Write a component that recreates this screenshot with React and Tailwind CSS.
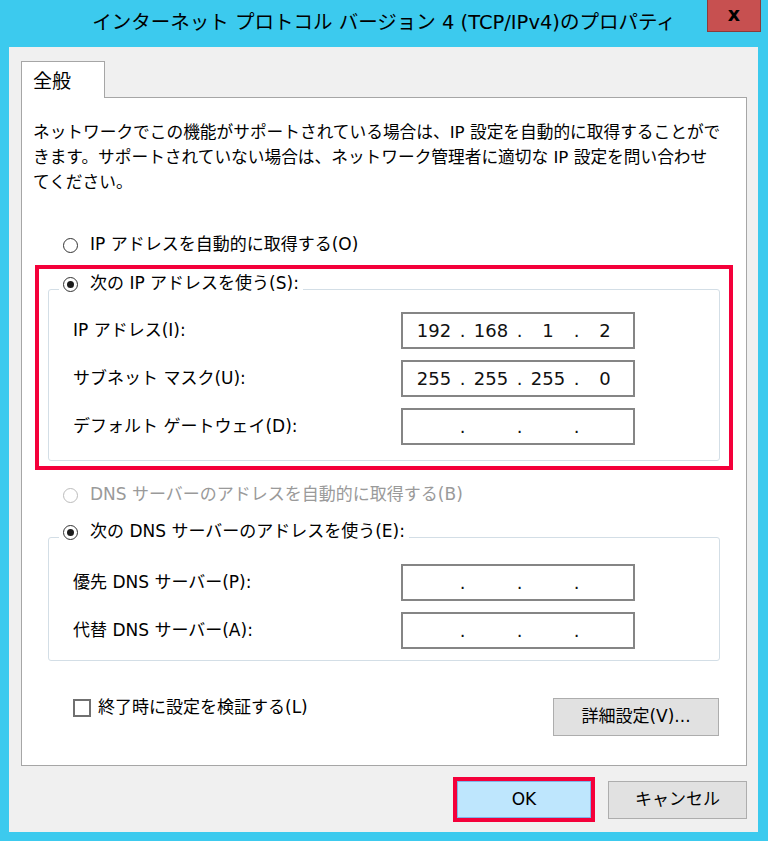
import React from "react";

const FONT = { fontFamily: '"DejaVu Sans", "Noto Sans CJK JP", sans-serif' };

function Radio({ checked, disabled }) {
  return (
    <span
      className={`flex items-center justify-center w-[15px] h-[15px] rounded-full border bg-white shrink-0 ${
        disabled ? "border-[#bcbcbc]" : "border-[#333333]"
      }`}
    >
      {checked && <span className="w-[7px] h-[7px] rounded-full bg-[#1c1c1c]" />}
    </span>
  );
}

function IpField({ parts }) {
  return (
    <div className="flex items-center w-[234px] h-[37px] border-2 border-[#858585] bg-white pl-[6px] text-[18px] text-[#111]">
      {parts.map((p, i) => (
        <React.Fragment key={i}>
          <span className="w-[50px] text-center">{p}</span>
          {i < 3 && <span className="w-[7px] text-center">.</span>}
        </React.Fragment>
      ))}
    </div>
  );
}

function Row({ label, parts }) {
  return (
    <div className="flex items-center pl-[24px]">
      <span className="w-[328px] text-[17px] whitespace-nowrap">{label}</span>
      <IpField parts={parts} />
    </div>
  );
}

function Legend({ text, ml }) {
  return (
    <legend className={`${ml} px-[4px] pb-[10px]`}>
      <span className="flex items-center h-[24px] gap-[12px] text-[17px] whitespace-nowrap">
        <Radio checked />
        <span>{text}</span>
      </span>
    </legend>
  );
}

export default function App() {
  const empty = ["", "", "", ""];
  return (
    <div className="relative w-[768px] h-[841px] bg-[#3ccaee] overflow-hidden text-black" style={FONT}>
      {/* title bar */}
      <div className="h-[47px] flex items-center justify-center text-[19.5px] whitespace-nowrap pb-[2px]">
        インターネット プロトコル バージョン 4 (TCP/IPv4)のプロパティ
      </div>
      <div className="absolute top-0 left-[707px] w-[54px] h-[32px] bg-[#c75050] border border-[#8a3b3b] border-t-0 flex items-center justify-center text-[19px] font-bold leading-none pb-[3px]">
        x
      </div>

      {/* client area */}
      <div className="ml-[9px] w-[749px] h-[785px] bg-[#f0f0f0] pt-[14px] pl-[12px]">
        <div className="relative z-10 -mb-px w-[84px] h-[37px] bg-white border border-b-0 border-[#a6a6a6] pl-[11px] pt-[5px] text-[19px]">
          全般
        </div>
        <div className="w-[726px] h-[669px] bg-white border border-[#a6a6a6]">
          <div className="pt-[22px] pl-[11px] text-[16.7px] leading-[25px]">
            <div className="whitespace-nowrap">ネットワークでこの機能がサポートされている場合は、IP 設定を自動的に取得することがで</div>
            <div className="whitespace-nowrap">きます。サポートされていない場合は、ネットワーク管理者に適切な IP 設定を問い合わせ</div>
            <div className="whitespace-nowrap">てください。</div>
          </div>

          <div className="mt-[38px] h-[24px] flex items-center gap-[12px] pl-[41px] text-[17px]">
            <Radio />
            <span>IP アドレスを自動的に取得する(O)</span>
          </div>

          <div className="mt-[8px] ml-[13px] w-[698px] border-4 border-[#f4003a]">
            <fieldset className="mt-[3px] mb-[5px] mx-[9px] border border-[#d3dee6] rounded-[3px] pb-[15px]">
              <Legend text="次の IP アドレスを使う(S):" ml="ml-[10px]" />
              <div className="mt-[6px] flex flex-col gap-[11px]">
                <Row label="IP アドレス(I):" parts={["192", "168", "1", "2"]} />
                <Row label="サブネット マスク(U):" parts={["255", "255", "255", "0"]} />
                <Row label="デフォルト ゲートウェイ(D):" parts={empty} />
              </div>
            </fieldset>
          </div>

          <div className="mt-[13px] h-[24px] flex items-center gap-[12px] pl-[41px] text-[17px] text-[#9a9a9a]">
            <Radio disabled />
            <span>DNS サーバーのアドレスを自動的に取得する(B)</span>
          </div>

          <fieldset className="mt-[13px] ml-[26px] w-[672px] border border-[#d3dee6] rounded-[3px] pb-[11px]">
            <Legend text="次の DNS サーバーのアドレスを使う(E):" ml="ml-[10px]" />
            <div className="mt-[10px] flex flex-col gap-[11px]">
              <Row label="優先 DNS サーバー(P):" parts={empty} />
              <Row label="代替 DNS サーバー(A):" parts={empty} />
            </div>
          </fieldset>

          <div className="mt-[37px] flex items-start justify-between pl-[51px] pr-[27px]">
            <div className="flex items-center h-[20px] gap-[7px] text-[17px]">
              <span className="w-[18px] h-[18px] border-2 border-[#707070] bg-white" />
              <span>終了時に設定を検証する(L)</span>
            </div>
            <div className="w-[166px] h-[38px] bg-[#e1e1e1] border border-[#adadad] flex items-center justify-center text-[17px]">
              詳細設定(V)...
            </div>
          </div>
        </div>

        <div className="mt-[11px] flex items-center justify-end gap-[13px] pr-[11px]">
          <div className="w-[142px] h-[45px] border-4 border-[#f4003a]">
            <div className="w-full h-full bg-[#bee6fd] border border-[#7eb4ea] flex items-center justify-center text-[17px]">
              OK
            </div>
          </div>
          <div className="w-[139px] h-[38px] bg-[#e1e1e1] border border-[#adadad] flex items-center justify-center text-[17px]">
            キャンセル
          </div>
        </div>
      </div>
    </div>
  );
}
